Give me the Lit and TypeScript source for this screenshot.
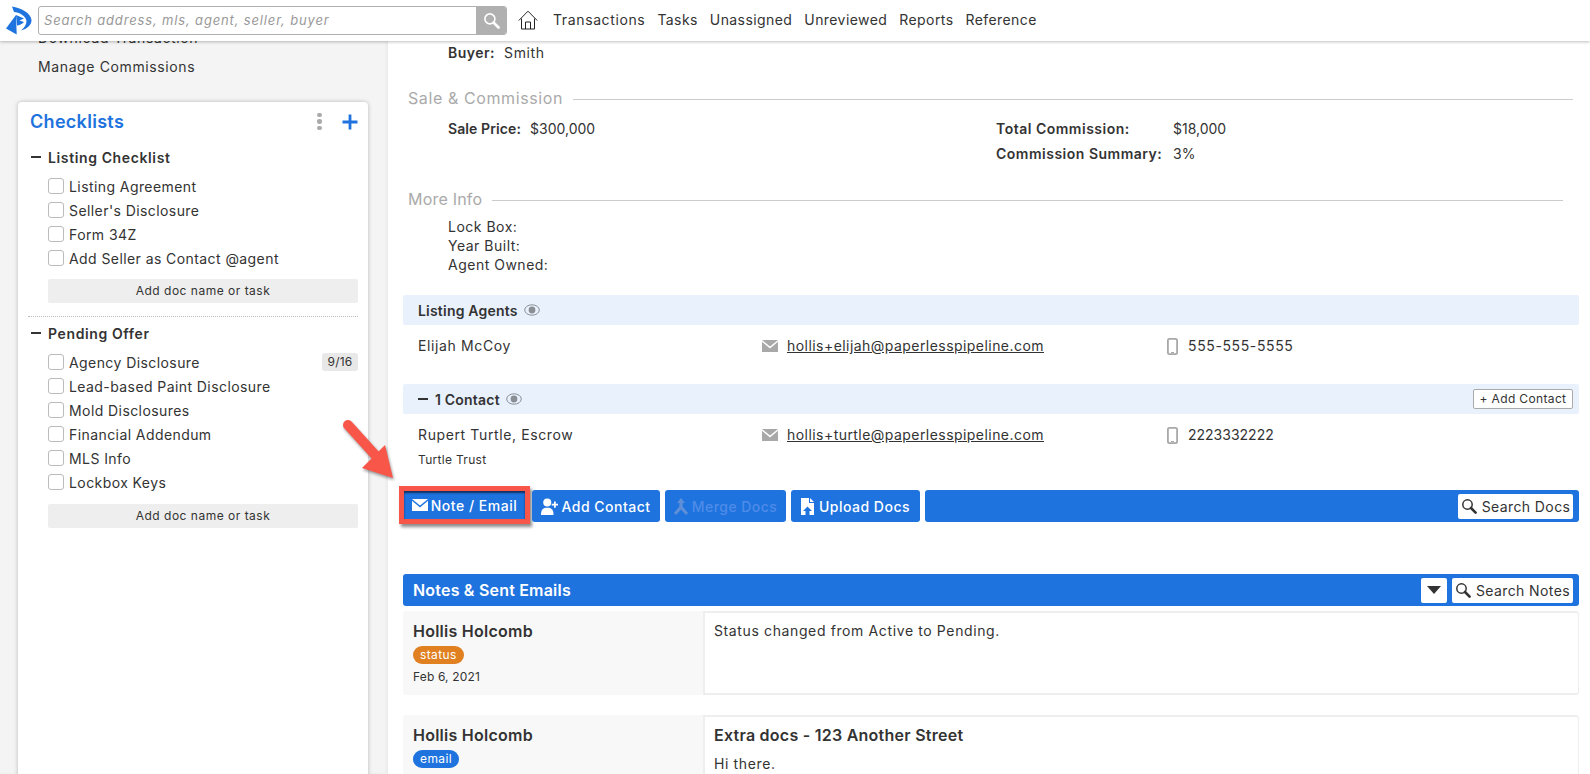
import { LitElement, html, css } from "lit";
import { customElement } from "lit/decorators.js";

const search = (c: string, s: number) => html`<svg width=${s} height=${s} viewBox="0 0 16 16" fill="none" stroke=${c}><circle cx="6.500" cy="6.500" r="4.700" stroke-width="1.500"/><path d="M10 10l4.600 4.600" stroke-width="2.600" stroke-linecap="round"/></svg>`;
const eye = html`<svg class="eye" width="16" height="12" viewBox="0 0 16 12" fill="none"><ellipse cx="8" cy="6" rx="7.300" ry="5.200" stroke="#8a8f96" stroke-width="1"/><circle cx="8" cy="6" r="3.400" fill="#8a8f96"/></svg>`;
const mail = html`<svg width="16" height="12" viewBox="0 0 16 12"><path d="M0 0h16L8 6.600z" fill="#a8a8a8"/><path d="M0 1.800v10.200h16V1.800L8 8.400z" fill="#a8a8a8"/></svg>`;
const phone = html`<svg width="11" height="17" viewBox="0 0 11 17"><rect x=".9" y=".9" width="9.200" height="15.200" rx="1.600" fill="#fff" stroke="#a8a8a8" stroke-width="1.800"/><rect x="4" y="14" width="3" height="1" fill="#a8a8a8"/></svg>`;

@customElement("app-root")
export class AppRoot extends LitElement {
  static styles = css`
    :host { display: block; height: 774px; width: 1590px; overflow: hidden; position: relative; font-family: "Inter", "Liberation Sans", sans-serif; font-size: 14px; color: #333; letter-spacing: .62px; }
    * { box-sizing: border-box; }
    svg { display: block; flex: none; }
    .top { height: 41px; display: flex; align-items: center; background: #fff; box-shadow: 0 1px 3px rgba(0,0,0,.25); position: relative; z-index: 2; }
    .logo { margin-left: 4px; width: 30px; height: 32px; }
    .search { margin-left: 4px; width: 469px; height: 29px; border: 1px solid #b0b0b0; border-radius: 3px; display: flex; overflow: hidden; }
    .search span { flex: 1; font-style: italic; font-size: 13px; color: #999; padding: 0 5px; line-height: 27px; letter-spacing: .85px; }
    .search b { width: 30px; background: #b0b0b0; display: flex; align-items: center; justify-content: center; }
    .home { margin-left: 11px; margin-right: 15px; margin-top: -1px; }
    nav { display: flex; gap: 12px; margin-top: -3px; }
    nav a { letter-spacing: .42px; }
    nav a:first-child { letter-spacing: .62px; }
    .body { display: flex; height: 733px; }
    aside { width: 388px; flex: none; background: #f4f4f4; box-shadow: inset -2px 0 3px rgba(0,0,0,.04); padding: 0 20px 0 18px; overflow: hidden; }
    .link { margin-left: 20px; line-height: 20px; height: 20px; }
    .dl { margin-top: -13px; margin-bottom: 9px; }
    .card { margin-top: 25px; height: 700px; background: #fff; border-radius: 4px; box-shadow: 0 0 4px rgba(0,0,0,.25); padding: 0 10px; }
    .card-h { height: 39px; display: flex; align-items: center; padding-left: 2px; }
    .card-h h2 { margin: 0; font-size: 18px; font-weight: 600; color: #1e73de; flex: 1; letter-spacing: .3px; }
    .dots { width: 5px; display: grid; gap: 2px; margin-right: 20px; }
    .dots i { width: 4.500px; height: 4.500px; border-radius: 50%; background: #aaa; }
    .sec { height: 24px; margin-top: 4px; display: flex; align-items: center; font-weight: 600; padding-left: 3px; }
    .dash { width: 10px; height: 2px; background: #333; margin-right: 7px; flex: none; }
    .items { padding-left: 20px; margin-top: 5px; }
    .item { height: 24px; display: flex; align-items: center; gap: 5px; letter-spacing: .42px; }
    .cb { width: 16px; height: 16px; border: 1px solid #bbb; border-radius: 3px; flex: none; }
    .item em { margin-left: auto; font-style: normal; background: #e8e8e8; border-radius: 3px; font-size: 12px; width: 36px; height: 18px; text-align: center; line-height: 18px; letter-spacing: .2px; }
    .add { margin: 9px 0 0 20px; height: 24px; background: #eee; border-radius: 2px; font-size: 12px; line-height: 24px; text-align: center; letter-spacing: .5px; }
    .add2 { margin-top: 10px; }
    .dot { margin: 13px 0 3px 0; border-top: 1px dotted #bbb; }
    main { flex: 1; min-width: 0; background: #fff; padding: 2px 11px 0 15px; overflow: hidden; }
    b { font-weight: 600; letter-spacing: .5px; }
    .buyer { margin-left: 45px; height: 20px; line-height: 20px; display: flex; gap: 9px; }
    .h { display: flex; align-items: center; height: 24px; gap: 10px; margin-left: 5px; font-size: 16px; color: #aaa; }
    .h i { flex: 1; height: 1px; background: #ccc; margin-top: 2px; }
    .h1 { margin-top: 23px; margin-right: 6px; letter-spacing: .6px; }
    .h2 { margin-top: 21px; margin-right: 16px; letter-spacing: .2px; }
    .sale { margin: 6px 0 0 45px; display: grid; grid-template-columns: 548px 177px 1fr; grid-auto-rows: 25px; align-items: center; }
    .sale div { display: flex; gap: 9px; }
    .sale div b { letter-spacing: .1px; }
    .num { letter-spacing: 0; }
    .more { margin: 6px 0 0 45px; letter-spacing: .5px; }
    .more div { height: 19px; line-height: 19px; }
    .bar { height: 30px; background: #e9f1fc; border-radius: 2px; display: flex; align-items: center; padding: 0 6px 0 15px; font-weight: 600; gap: 6px; letter-spacing: .2px; }
    .bar .dash { margin-right: 1px; height: 2px; }
    .bar .plus { margin-left: auto; background: #fff; border: 1px solid #aaa; border-radius: 2px; font-weight: 400; font-size: 12px; height: 20px; width: 100px; line-height: 18px; text-align: center; letter-spacing: .35px; }
    .c1 { margin-top: 21px; }
    .c2 { margin-top: 29px; }
    .row { display: grid; grid-template-columns: 344px 405px 1fr; padding: 11px 0 0 15px; height: 30px; line-height: 20px; }
    .row div { display: flex; align-items: center; height: 20px; }
    .em svg { margin-right: 9px; }
    .ph svg { margin-right: 10px; }
    .em a { text-decoration: underline; letter-spacing: .45px; }
    .tel { letter-spacing: 0; }
    .org { margin: 6px 0 0 15px; font-size: 12px; height: 20px; line-height: 20px; letter-spacing: .3px; }
    .tools { margin-top: 20px; height: 32px; display: flex; gap: 5px; }
    .btn { background: #1e73de; color: #fff; border-radius: 3px; display: flex; align-items: center; justify-content: center; gap: 3px; font-weight: 500; letter-spacing: .5px; }
    .note { margin: 1px 2px 3px 1px; width: 121px; border-radius: 0; box-shadow: inset 0 2px 2px #12305f, 0 0 0 5px #f9564a, 2px 3px 3px 5px rgba(0,0,0,.45); }
    .ac { width: 128px; }
    .mg { width: 121px; color: #4f8be8; gap: 4px; letter-spacing: .45px; }
    .ul { width: 129px; gap: 5px; letter-spacing: .48px; }
    .fill { flex: 1; justify-content: flex-end; padding-right: 6px; }
    .wbtn { background: #fff; color: #333; height: 25px; border-radius: 2px; display: flex; align-items: center; justify-content: center; gap: 5px; font-weight: 400; letter-spacing: .4px; }
    .w-docs { width: 115px; }
    .w-notes { width: 121px; }
    .notes { margin-top: 52px; height: 32px; background: #1e73de; border-radius: 3px; display: flex; align-items: center; padding: 0 6px 0 10px; gap: 5px; }
    .notes h3 { margin: 0; flex: 1; color: #fff; font-size: 16px; font-weight: 600; letter-spacing: .2px; }
    .drop { width: 26px; }
    .n { display: grid; grid-template-columns: 300px 1fr; height: 84px; margin-top: 5px; }
    .n + .n { margin-top: 20px; height: 100px; }
    .who { background: #f8f8f8; padding: 9px 10px; border-radius: 3px 0 0 3px; }
    .who strong { display: block; font-size: 16px; font-weight: 600; line-height: 22px; letter-spacing: .25px; }
    .tag { display: block; width: fit-content; height: 18px; line-height: 17px; border-radius: 9px; color: #fff; font-size: 12px; padding: 0 7px; margin-top: 4px; letter-spacing: .4px; }
    .st { background: #e08020; }
    .ml { background: #1e73de; }
    .date { font-size: 12px; margin-top: 4px; line-height: 18px; letter-spacing: .15px; }
    .txt { border: 2px solid #eee; border-right-width: 1px; border-radius: 0 3px 3px 0; padding: 8px 9px; line-height: 20px; }
    .txt strong { display: block; font-size: 16px; font-weight: 600; line-height: 20px; margin-bottom: 9px; letter-spacing: .25px; }
    .arrow { position: absolute; left: 335px; top: 415px; overflow: visible; filter: drop-shadow(1px 2px 1.500px rgba(0,0,0,.4)); }
  `;

  items(list: string[], badge = "") {
    return html`<div class="items">${list.map((t, i) => html`<div class="item"><span class="cb"></span><span>${t}</span>${i === 0 && badge ? html`<em>${badge}</em>` : ""}</div>`)}</div>`;
  }

  render() {
    return html`
      <header class="top">
        <svg class="logo" viewBox="0 0 30 32" fill="#1e73de"><path d="M8 1.500 C17 3 27 8 27.500 15 C27.800 20 23 24 17 25.500 C20 23 22.500 20 22.500 16 C22 11 15 7 10 7z"/><path d="M2 23.500 L12 10 L12.700 29.500z"/><path d="M12 10 L20 13.500 L15.500 15.500 L20 17 C18 19 15 20.500 13 20.500z"/></svg>
        <div class="search"><span>Search address, mls, agent, seller, buyer</span><b>${search("#fff", 17)}</b></div>
        <svg class="home" width="20" height="20" viewBox="0 0 20 20" fill="none" stroke="#222" stroke-width="1"><path d="M.8 10.500 10 1.200l9.200 9.300M3.500 8.500V19h13V8.500M7.500 19v-7h5v7"/></svg>
        <nav><a>Transactions</a><a>Tasks</a><a>Unassigned</a><a>Unreviewed</a><a>Reports</a><a>Reference</a></nav>
      </header>
      <div class="body">
        <aside>
          <div class="link dl">Download Transaction</div>
          <div class="link">Manage Commissions</div>
          <section class="card">
            <div class="card-h"><h2>Checklists</h2>
              <span class="dots"><i></i><i></i><i></i></span>
              <svg width="16" height="16" viewBox="0 0 16 16"><path d="M8 .5v15M.5 8h15" stroke="#1e73de" stroke-width="2.800"/></svg>
            </div>
            <div class="sec"><span class="dash"></span>Listing Checklist</div>
            ${this.items(["Listing Agreement", "Seller's Disclosure", "Form 34Z", "Add Seller as Contact @agent"])}
            <div class="add">Add doc name or task</div>
            <div class="dot"></div>
            <div class="sec"><span class="dash"></span>Pending Offer</div>
            ${this.items(["Agency Disclosure", "Lead-based Paint Disclosure", "Mold Disclosures", "Financial Addendum", "MLS Info", "Lockbox Keys"], "9/16")}
            <div class="add add2">Add doc name or task</div>
          </section>
        </aside>
        <main>
          <div class="buyer"><b>Buyer:</b><span>Smith</span></div>
          <div class="h h1"><span>Sale &amp; Commission</span><i></i></div>
          <div class="sale">
            <div><b>Sale Price:</b><span class="num">$300,000</span></div><b>Total Commission:</b><span class="num">$18,000</span>
            <span></span><b>Commission Summary:</b><span class="num">3%</span>
          </div>
          <div class="h h2"><span>More Info</span><i></i></div>
          <div class="more"><div>Lock Box:</div><div>Year Built:</div><div>Agent Owned:</div></div>
          <div class="bar c1">Listing Agents ${eye}</div>
          <div class="row"><div>Elijah McCoy</div><div class="em">${mail}<a>hollis+elijah@paperlesspipeline.com</a></div><div class="ph">${phone}555-555-5555</div></div>
          <div class="bar c2"><span class="dash"></span>1 Contact ${eye}<span class="plus">+ Add Contact</span></div>
          <div class="row"><div>Rupert Turtle, Escrow</div><div class="em">${mail}<a>hollis+turtle@paperlesspipeline.com</a></div><div class="ph">${phone}<span class="tel">2223332222</span></div></div>
          <div class="org">Turtle Trust</div>
          <div class="tools">
            <div class="btn note"><svg width="16" height="12" viewBox="0 0 16 12"><path d="M0 0h16L8 6.600z" fill="#fff"/><path d="M0 1.800v10.200h16V1.800L8 8.400z" fill="#fff"/></svg>Note / Email</div>
            <div class="btn ac"><svg width="17" height="17" viewBox="0 0 19 19" fill="#fff"><circle cx="7" cy="5" r="4.500"/><path d="M0 19c0-6 2-8 7-8s7 2 7 8z"/><path d="M12 6.500h2.500V4h2v2.500H19v2h-2.500V11h-2V8.500H12z"/></svg>Add Contact</div>
            <div class="btn mg"><svg width="14" height="17" viewBox="0 0 14 17" fill="#5f8fd6"><path d="M7 0l4 5H8.600v3.500L14 15l-2 2-5-5.500L2 17l-2-2 5.400-6.500V5H3z"/></svg>Merge Docs</div>
            <div class="btn ul"><svg width="13" height="17" viewBox="0 0 13 17" fill="#fff"><path d="M0 0h8v5h5v12H8.500v-4H11L6.500 8.500 2 13h2.500v4H0z"/><path d="M9 0l4 4H9z"/></svg>Upload Docs</div>
            <div class="btn fill"><div class="wbtn w-docs">${search("#333", 16)}Search Docs</div></div>
          </div>
          <div class="notes"><h3>Notes &amp; Sent Emails</h3>
            <div class="wbtn drop"><svg width="14" height="8" viewBox="0 0 14 8"><path d="M0 0h14L7 8z" fill="#333"/></svg></div>
            <div class="wbtn w-notes">${search("#333", 16)}Search Notes</div>
          </div>
          <div class="n"><div class="who"><strong>Hollis Holcomb</strong><span class="tag st">status</span><div class="date">Feb 6, 2021</div></div><div class="txt">Status changed from Active to Pending.</div></div>
          <div class="n"><div class="who"><strong>Hollis Holcomb</strong><span class="tag ml">email</span></div><div class="txt"><strong>Extra docs - 123 Another Street</strong>Hi there.</div></div>
        </main>
      </div>
      <svg class="arrow" width="62" height="66" viewBox="0 0 62 66"><path d="M13 10 L42 42" stroke="#f9564a" stroke-width="10" stroke-linecap="round"/><path d="M58 63 L50 30 L27 53z" fill="#f9564a"/></svg>
    `;
  }
}
